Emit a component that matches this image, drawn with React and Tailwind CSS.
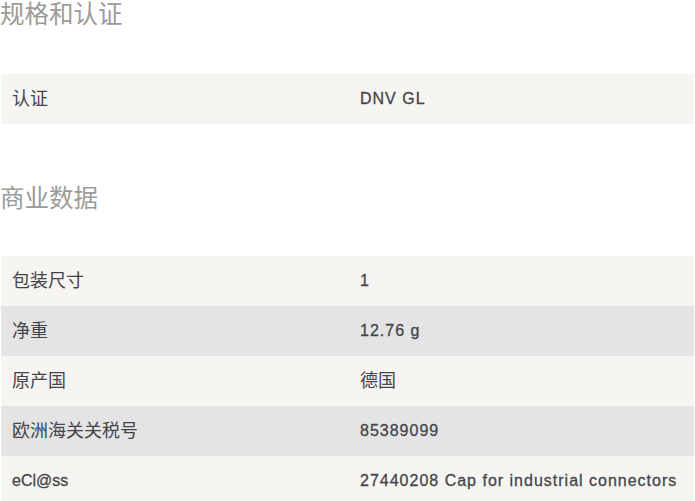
const SECTIONS = [
  {
    title: '规格和认证',
    spacing: 'mb-[44px]',
    rows: [['认证', 'DNV GL']],
  },
  {
    title: '商业数据',
    spacing: 'mt-[60px] mb-[42px]',
    rows: [
      ['包装尺寸', '1'],
      ['净重', '12.76 g'],
      ['原产国', '德国'],
      ['欧洲海关关税号', '85389099'],
      ['eCl@ss', '27440208 Cap for industrial connectors'],
    ],
  },
]

const isCjk = (text) => /[\u4e00-\u9fff]/.test(text)

// CJK glyphs render a size up in the original; latin gets a faux-medium stroke
function cellText(text) {
  return isCjk(text)
    ? 'text-[18px]'
    : 'text-[16px] [-webkit-text-stroke:0.3px_#45444c]'
}

export default function App() {
  return (
    <div
      className="w-[695px] bg-white"
      style={{ fontFamily: '"Liberation Sans", "Noto Sans CJK SC", sans-serif' }}
    >
      {SECTIONS.map((section) => (
        <section key={section.title}>
          <h2 className={`text-[24.5px] leading-[30px] text-[#9b9b98] ${section.spacing}`}>
            {section.title}
          </h2>
          <div className="px-px">
            {section.rows.map(([label, value], i) => (
              <div
                key={label}
                className={`flex h-[50px] items-center text-[#45444c] ${i % 2 === 0 ? 'bg-[#f6f5f2]' : 'bg-[#e4e4e4]'}`}
              >
                <div className={`w-[359px] pl-[11px] ${cellText(label)}`}>{label}</div>
                <div className={`flex-1 ${cellText(value)} ${isCjk(value) ? '' : 'tracking-[1px]'}`}>
                  {value}
                </div>
              </div>
            ))}
          </div>
        </section>
      ))}
    </div>
  )
}
